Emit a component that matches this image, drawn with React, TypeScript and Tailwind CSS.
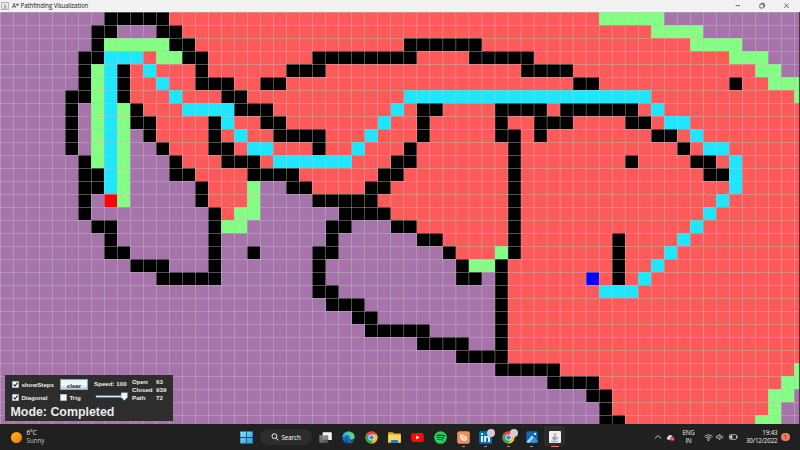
import React from "react";

const CELL_W = 13.02;
const CELL_H = 13.01;
const GRID_W = 799;
const GRID_H = 412.4;

// p: untouched, k: wall, r: closed, g: open, c: path, s: start, b: goal
const ROWS = [
  "p8k5r33g5p11",
  "p7k2p3k2r36g4p8",
  "p7k1g5k2r16k6r16g4p5",
  "p6k2c3r1g2k2r8k8r4k5r15g3p3",
  "p6k1g1c1k1r1c1r3k1r6k3r15k4r14g2p2",
  "p6k1g1c1k1r2c1r2k3r2k2r22k2r10k1r2g3",
  "p5k2g1c1k1r3c1r3k2r12c19r11g1",
  "p5k1p1g1c1g1k1r3c4k3r9c1r1k2r4k4r1k6r1c1r11",
  "p5k1p1g1c1g1k2r4k1c1r2k2r7c1r2k1r5k1r2k3r4k2r1c2r9",
  "p5k1p1g1c1g1p1k1r4k1r1c1r2k4r3c1r3k1r5k2r1k1r8k2r1c1r8",
  "p5k1p1g1c1g1p2k1r3k2r1c2r3k1r2c1r3k1r7k1r12k1r1c2r6",
  "p6k1g1c1g1p3k1r3k3r1c6r3k2r7k1r8k1r4k2r1c1r5",
  "p6k2c1g1p3k2r4k4r6k2r8k1r14k2c1r5",
  "p6k2c1g1p5k1r3g1p2k2r4k2r9k1r16c1r5",
  "p6k1p1s1g1p5k1r3g1p4k5r10k1r15c1r6",
  "p6k1p9k1r1g2p6k4r9k1r14c1r7",
  "p7k2p7k1g2p6k2p3k2r7k1r13c1r8",
  "p8k1p7k1p8k1p6k2r5k1r7k1r4c1r9",
  "p8k2p6k1p2k1p4k2p8k1r3g1k1r7k1r3c1r10",
  "p10k3p3k1p7k1p10k1g2k1r8k1r2c1r11",
  "p12k5p7k1p10k2p1k1r6b1r1k1r1c1r12",
  "p24k2p12k1r7c3r13",
  "p25k3p10k1r23",
  "p27k2p9k1r23",
  "p28k5p5k1r23",
  "p32k4p2k1r23",
  "p35k4r23",
  "p38k5r18g1",
  "p42k4r14g2",
  "p45k2r12g2p1",
  "p46k1r12g1p2",
  "p46k2r10g2p2",
];

const FILL: Record<string, string> = {
  p: "#a674aa",
  k: "#000000",
  r: "#ff5a5a",
  g: "#84ff84",
  c: "#1ee6ff",
  s: "#ff0000",
  b: "#0000ff",
};

function Board() {
  const cells: React.ReactNode[] = [];
  ROWS.forEach((row, y) => {
    let x = 0;
    for (const m of row.matchAll(/([a-z])(\d+)/g)) {
      const n = Number(m[2]);
      if (m[1] !== "p") {
        cells.push(
          <rect key={`${y}-${x}`} x={x * CELL_W} y={y * CELL_H} width={n * CELL_W} height={CELL_H} fill={FILL[m[1]]} shapeRendering="crispEdges" />
        );
      }
      x += n;
    }
  });
  return (
    <svg className="block" width="800" height="412.4" viewBox="0 0 800 412.4">
      <rect width="800" height={GRID_H} fill={FILL.p} />
      {cells}
      {Array.from({ length: 62 }, (_, i) => (
        <rect key={`v${i}`} x={i * CELL_W} y="0" width="0.42" height={GRID_H} fill="#c0c0c0" />
      ))}
      {Array.from({ length: 32 }, (_, i) => (
        <rect key={`h${i}`} x="0" y={i * CELL_H} width={GRID_W} height="0.42" fill="#c0c0c0" />
      ))}
      <rect x="799" y="0" width="1" height={GRID_H} fill="#3a2028" fillOpacity="0.8" />
    </svg>
  );
}

function JavaCup({ className }: { className: string }) {
  return (
    <svg className={className} viewBox="0 0 16 16" fill="none">
      <path d="M8.6 1.5c1.6 1.7-2.6 2.6-.6 5M10.6 3.4C8.6 4.4 9.8 5.4 9 6.7" stroke="#e0502a" strokeWidth="1.1" />
      <path d="M4.5 8h6.4M5 9.8h5.6M5.6 11.5h4.6M3 13.6c3 1 7.600 1 10-.2M11.200 8c2.300-.6 2.300 2-.2 2.600" stroke="#5382a1" strokeWidth="1.1" />
    </svg>
  );
}

function TitleBar() {
  return (
    <header className="flex h-3 shrink-0 items-center bg-[#f2f2f2] pl-px text-[#1a1a1a]">
      <div className="flex h-2 w-2 items-center justify-center border-[0.5px] border-[#b5b5b5] bg-[#e9ecef]">
        <JavaCup className="h-[7px] w-[7px]" />
      </div>
      <span className="ml-[3px] whitespace-nowrap text-[6.2px] leading-3 tracking-[-0.13px]">A* Pathfinding Visualization</span>
      <svg className="ml-auto mr-[11px] h-3 w-[56px]" viewBox="0 0 56 12" fill="none" stroke="#222" strokeWidth="0.65">
        <path d="M2.600 5.600h4.600" />
        <rect x="26.800" y="4.200" width="3.800" height="3.800" rx="0.8" />
        <path d="M28 3.300h2.400q1.200 0 1.200 1.200v2.400" />
        <path d="M51.300 3.500l4.500 4.500M55.800 3.500l-4.500 4.500" />
      </svg>
    </header>
  );
}

function Check({ label, checked = false }: { label: string; checked?: boolean }) {
  return (
    <div className="flex h-[7px] items-center">
      <svg className="h-[7px] w-[7px] shrink-0" viewBox="0 0 7 7">
        <rect x="0.3" y="0.3" width="6.400" height="6.400" fill="#f4f8fb" stroke="#9fb2c2" strokeWidth="0.5" />
        {checked && <path d="M1.700 3.300L3 5.100L5.500 1.700" fill="none" stroke="#1c2730" strokeWidth="1.1" />}
      </svg>
      <span className="ml-[2.400px] whitespace-nowrap">{label}</span>
    </div>
  );
}

function Stat({ name, value }: { name: string; value: string }) {
  return (
    <div className="flex h-[8.3px] items-center">
      <span className="w-6">{name}</span>
      <span>{value}</span>
    </div>
  );
}

function ControlPanel() {
  return (
    <section className="absolute bottom-[3px] left-[5px] flex h-[46px] w-[168px] flex-col bg-[#2d2d2d] font-['Liberation_Sans',Arial,sans-serif] text-[6.2px] font-bold leading-[8px] text-[#ececec]">
      <div className="flex h-[29px] pl-[7px]">
        <div className="flex w-12 flex-col gap-[6px] pt-[6px]">
          <Check label="showSteps" checked />
          <Check label="Diagonal" checked />
        </div>
        <div className="flex w-[34px] flex-col gap-1 pt-1">
          <button className="h-[11px] w-[28px] border-[0.5px] border-[#8fa5b8] bg-gradient-to-b from-[#e6eff6] via-[#f8fbfd] to-[#b5cadb] text-center leading-[11px] text-[#222]">clear</button>
          <Check label="Trig" />
        </div>
        <div className="flex w-[38px] flex-col pt-[5px]">
          <span className="whitespace-nowrap">Speed: 100</span>
          <svg className="mt-[4px] h-[9px] w-[34px]" viewBox="0 0 34 9">
            <rect x="2" y="3.700" width="27" height="1.600" fill="#dce9f4" stroke="#7f9db5" strokeWidth="0.4" />
            <path d="M27.200 0.700h6.200v4.600L30.300 8.400L27.200 5.300z" fill="#f0f6fb" stroke="#8ba3b6" strokeWidth="0.5" />
          </svg>
        </div>
        <div className="flex flex-col pt-[2px]">
          <Stat name="Open" value="63" />
          <Stat name="Closed" value="939" />
          <Stat name="Path" value="72" />
        </div>
      </div>
      <div className="pl-[5.500px] pt-[0.500px] text-[12.4px] leading-[15px]">Mode: Completed</div>
    </section>
  );
}

function ChromeIcon() {
  return (
    <svg className="h-[13px] w-[13px]" viewBox="0 0 24 24">
      <circle cx="12" cy="12" r="11" fill="#fbc116" />
      <path d="M12 12L2.470 6.500A11 11 0 0 1 21.530 6.500z" fill="#e8453c" />
      <path d="M12 12L2.470 6.500A11 11 0 0 0 12 23l4.300-8z" fill="#34a853" />
      <path d="M12 6.500h9.530A11 11 0 0 1 12 23l4.800-8.300z" fill="#fbc116" />
      <circle cx="12" cy="12" r="5.600" fill="#fff" />
      <circle cx="12" cy="12" r="4.300" fill="#3f82ee" />
    </svg>
  );
}

function TaskSlot({ children, running, active }: { children: React.ReactNode; running?: boolean; active?: boolean }) {
  return (
    <div className="relative flex h-full w-[22.95px] items-center justify-center">
      {active && <span className="absolute left-[1px] top-[2px] h-5 w-[21px] rounded-[2px] bg-[#2c2c2c]" />}
      <span className="relative flex">{children}</span>
      {running && <span className="absolute bottom-[2.500px] h-[1.200px] w-[3px] rounded-full bg-[#a0a0a0]" />}
      {active && <span className="absolute bottom-[2.500px] h-[1.300px] w-[8px] rounded-full bg-[#f0785a]" />}
    </div>
  );
}

function Badge() {
  return <span className="absolute -right-[2.500px] -top-[2px] h-2 w-2 rounded-full bg-[#d8c9d3]" />;
}

function TaskIcons() {
  return (
    <div className="flex h-[25.600px]">
      <TaskSlot>
        <svg className="h-[13px] w-[13px]" viewBox="0 0 13 13">
          <defs>
            <linearGradient id="win" x1="0" y1="0" x2="1" y2="1">
              <stop offset="0" stopColor="#8fe4fb" />
              <stop offset="1" stopColor="#1b9bea" />
            </linearGradient>
          </defs>
          <path d="M.3.6h5.900v5.700H.3zM6.800.6h5.900v5.700H6.800zM.3 6.900h5.900v5.700H.3zM6.800 6.900h5.900v5.700H6.800z" fill="url(#win)" />
        </svg>
      </TaskSlot>
      <div className="mx-[2px] flex items-center">
        <div className="flex h-[16px] w-[52px] items-center rounded-full bg-[#2d2d2d] pl-[11.500px] text-[6.2px] tracking-[-0.06px] text-white">
          <svg className="h-2 w-2" viewBox="0 0 8 8" fill="none" stroke="#fff" strokeWidth="0.9">
            <circle cx="3.400" cy="3.200" r="2.400" />
            <path d="M5.100 5l2.300 2.400" />
          </svg>
          <span className="ml-[2px]">Search</span>
        </div>
      </div>
      <TaskSlot>
        <svg className="h-[13px] w-[13px]" viewBox="0 0 13 13">
          <defs>
            <linearGradient id="tv" x1="0" y1="0" x2="1" y2="1">
              <stop offset="0" stopColor="#999" />
              <stop offset="1" stopColor="#4d4d4d" />
            </linearGradient>
          </defs>
          <rect x="3.600" y="1.200" width="9.200" height="7.800" rx="0.6" fill="#f4f4f4" />
          <rect x="0.300" y="4.200" width="9" height="7.800" rx="0.6" fill="url(#tv)" fillOpacity="0.85" />
        </svg>
      </TaskSlot>
      <TaskSlot>
        <svg className="h-[13px] w-[13px]" viewBox="0 0 24 24">
          <defs>
            <linearGradient id="edgeTop" x1="0" y1="0" x2="1" y2="0.3">
              <stop offset="0" stopColor="#2fb4ee" />
              <stop offset="1" stopColor="#5fd863" />
            </linearGradient>
          </defs>
          <circle cx="12" cy="12" r="11.300" fill="#1672cc" />
          <path d="M.8 11.400C1.500 5 6 .7 12 .7c6.500 0 11.300 4.500 11.300 9.800 0 3.500-2.600 5.700-5.800 5.700-3 0-4.200-1.200-3.400-2.500 1.700-3-1.200-6-5-6C5.200 7.700 2 9.500.8 11.400z" fill="url(#edgeTop)" />
          <path d="M8.200 13.500c0 5.500 5 8.500 9.600 8-5.400 3.400-12 1-12-5 0-4 2.600-6.500 5.700-6.700-2 .6-3.300 2-3.300 3.700z" fill="#0b4a9b" />
          <path d="M14.100 13.700c-.8 1.300.4 2.500 3.400 2.500 2 0 3.800-.8 4.800-2.300l.6 2.600-5 1.300c-3.500 0-5.500-2-3.800-4.100z" fill="#202020" />
        </svg>
      </TaskSlot>
      <TaskSlot><ChromeIcon /></TaskSlot>
      <TaskSlot>
        <svg className="h-[13px] w-[13px]" viewBox="0 0 13 13">
          <path d="M.2 1.300h4.600l1.300 1.300h6.700v9H.2z" fill="#e9a820" />
          <path d="M.2 3.700h12.600v8H.2z" fill="#ffd65a" />
          <path d="M2.800 12V10q0-1 1-1h5.400q1 0 1 1V12z" fill="#1e7fd2" />
        </svg>
      </TaskSlot>
      <TaskSlot>
        <svg className="h-[13px] w-[13px]" viewBox="0 0 13 13">
          <rect x="0.200" y="2" width="12.600" height="9" rx="2" fill="#fa0909" />
          <path d="M5.200 4.600v3.800L8.500 6.500z" fill="#fff" />
        </svg>
      </TaskSlot>
      <TaskSlot>
        <svg className="h-[13px] w-[13px]" viewBox="0 0 13 13" fill="none" stroke="#17221a" strokeLinecap="round">
          <circle cx="6.500" cy="6.500" r="6.300" fill="#1ed760" stroke="none" />
          <path d="M2.900 4.500c2.500-.8 5.300-.5 7.400.6" strokeWidth="1.200" />
          <path d="M3.200 6.600c2.200-.6 4.500-.3 6.400.7" strokeWidth="1" />
          <path d="M3.500 8.500c1.900-.5 3.800-.2 5.400.7" strokeWidth="0.800" />
        </svg>
      </TaskSlot>
      <TaskSlot running>
        <svg className="h-[13px] w-[13px]" viewBox="0 0 13 13">
          <rect x="0.200" y="0.200" width="12.600" height="12.600" rx="2" fill="#ef8f55" />
          <path d="M3.300 3.300c-1 3 .2 6.600 4 6.700 2.400 0 3.600-2.300 2.300-4.300C8.400 4 7 5 6.400 4.200 5.700 3.200 4.500 2.400 3.300 3.300z" fill="#fbe6d8" />
          <path d="M4.500 4.200l3.600 4" stroke="#ef8f55" strokeWidth="0.900" />
        </svg>
      </TaskSlot>
      <TaskSlot running>
        <svg className="h-[13px] w-[13px]" viewBox="0 0 13 13">
          <rect x="0.200" y="0.200" width="12.600" height="12.600" rx="1" fill="#0a74b8" />
          <circle cx="3" cy="3" r="1.100" fill="#fff" />
          <path d="M2.100 5h1.800v5.900H2.100zM5.200 5H7v.8c1.200-1.500 4-1.100 4 1.600v3.500H9.200V7.900c0-1.900-2.200-1.700-2.200 0v3H5.200z" fill="#fff" />
        </svg>
        <Badge />
      </TaskSlot>
      <TaskSlot running><ChromeIcon /><Badge /></TaskSlot>
      <TaskSlot running>
        <svg className="h-[12px] w-[12px]" viewBox="0 0 13 13">
          <rect x="0.400" y="0.400" width="12.200" height="12.200" rx="1.200" fill="#1765b5" />
          <path d="M.6 11.500L7 4.600l5.600 6.200v.6q0 1.200-1.200 1.200H1.600z" fill="#2f95df" />
          <path d="M.6 11.800L6.500 5l1.800 2-5 5.600H1.600z" fill="#a2ddfb" />
          <circle cx="9.800" cy="3.200" r="1.200" fill="#e8f6ff" />
        </svg>
      </TaskSlot>
      <TaskSlot active>
        <span className="flex h-3 w-3 items-center justify-center rounded-[1px] bg-[#eef0f2]">
          <JavaCup className="h-[11px] w-[11px]" />
        </span>
      </TaskSlot>
    </div>
  );
}

function Tray() {
  return (
    <div className="ml-auto flex h-full items-center pr-[10.500px] text-[6.2px] leading-[8.400px] tracking-[-0.13px] text-[#f2f2f2]">
      <svg className="h-2 w-2" viewBox="0 0 8 8" fill="none" stroke="#eee" strokeWidth="0.800">
        <path d="M.9 5.500L4 2.500l3.100 3" />
      </svg>
      <svg className="ml-[4px] h-[9px] w-[9px]" viewBox="0 0 9 9">
        <path d="M2.200 6.700C.6 6.700.2 4.400 1.900 4.100 2.300 1.500 5.700 1.400 6.300 3.700c1.700 0 1.900 2.900 0 3z" fill="#e6dcdc" />
        <circle cx="6.300" cy="6" r="2.300" fill="#cf3340" />
        <path d="M5.500 5.200l1.600 1.600M7.100 5.200L5.500 6.800" stroke="#fff" strokeWidth="0.500" />
      </svg>
      <div className="ml-[6.500px] w-[15px] text-center">
        <div>ENG</div>
        <div>IN</div>
      </div>
      <svg className="ml-[7.500px] h-[9px] w-[9px]" viewBox="0 0 9 9" fill="none" stroke="#eee" strokeWidth="0.800">
        <path d="M.5 3.600c2.200-2.200 5.800-2.200 8 0M1.800 5c1.500-1.500 3.900-1.500 5.400 0M3.100 6.300c.8-.8 2-.8 2.800 0" />
        <circle cx="4.500" cy="7.200" r="0.700" fill="#eee" stroke="none" />
      </svg>
      <svg className="ml-[3px] h-[8px] w-[8px]" viewBox="0 0 8 8" fill="none" stroke="#eee" strokeWidth="0.700">
        <path d="M.6 3h1.500L4 1.300v5.400L2.100 5H.6zM5.200 2.800q.9 1.200 0 2.400" />
        <path d="M6.300 1.900q1.500 2.100 0 4.200" stroke="#888" />
      </svg>
      <svg className="ml-[5px] h-[8px] w-[9px]" viewBox="0 0 9 8">
        <rect x="0.500" y="1.700" width="7" height="4.600" rx="1" fill="none" stroke="#eee" strokeWidth="0.700" />
        <path d="M1.300 2.500h2v3h-2zM7.900 3.200h.8v1.600h-.8z" fill="#eee" />
      </svg>
      <div className="ml-[7px] w-[33px] whitespace-nowrap text-right">
        <div>19:43</div>
        <div>30/12/2022</div>
      </div>
      <div className="ml-[3.500px] flex h-[8.500px] w-[8.500px] items-center justify-center rounded-full bg-[#f5775c] text-[5.500px] text-[#3a1a14]">1</div>
    </div>
  );
}

function Taskbar() {
  return (
    <footer className="flex h-[25.600px] shrink-0 items-center bg-[#202020]">
      <div className="flex w-[235px] shrink-0 items-center pl-[11px] text-[6.2px] leading-[8.400px] text-[#f0f0f0]">
        <span className="h-[11px] w-[11px] rounded-full bg-gradient-to-br from-[#ffb521] to-[#ef7712]" />
        <div className="ml-[4.500px]">
          <div>6°C</div>
          <div className="text-[#c4c4c4]">Sunny</div>
        </div>
      </div>
      <TaskIcons />
      <Tray />
    </footer>
  );
}

export default function App() {
  return (
    <div className="flex h-[450px] w-[800px] flex-col overflow-hidden bg-[#202020] font-['Open_Sans','Noto_Sans',sans-serif]">
      <TitleBar />
      <main className="relative h-[412.400px] shrink-0">
        <Board />
        <ControlPanel />
      </main>
      <Taskbar />
    </div>
  );
}
